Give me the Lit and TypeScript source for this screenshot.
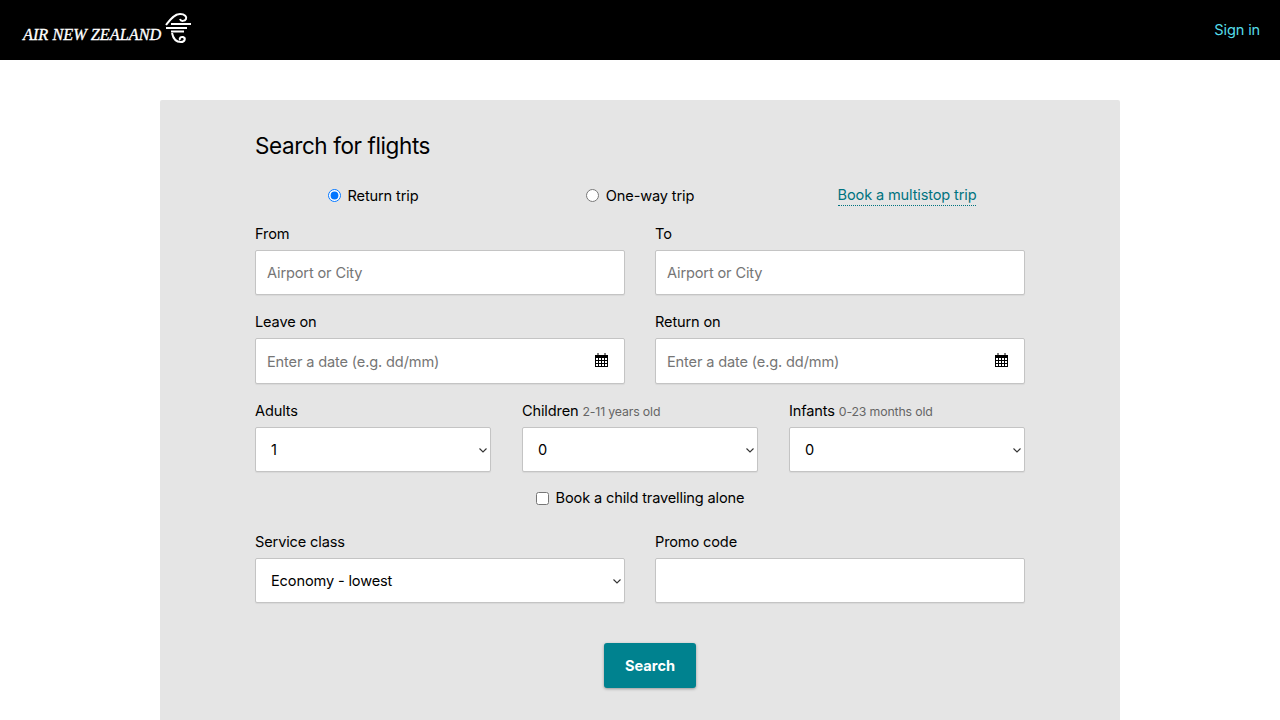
import { LitElement, html, css } from 'lit';
import { customElement } from 'lit/decorators.js';

const calendar = html`<svg class="cal" width="13" height="14" viewBox="0 0 13 14" aria-hidden="true">
    <path d="M3 0v2M10 0v2" stroke="#000" stroke-width="1" fill="none"/>
    <path fill="#000" fill-rule="evenodd" d="M0 2h13v12H0zM1 5v2h2V5zm3 0v2h2V5zm3 0v2h2V5zm3 0v2h2V5zM1 8v2h2V8zm3 0v2h2V8zm3 0v2h2V8zm3 0v2h2V8zM1 11v2h2v-2zm3 0v2h2v-2zm3 0v2h2v-2zm3 0v2h2v-2z"/>
</svg>`;

const chevron = html`<svg class="chev" width="8" height="5" viewBox="0 0 8 5" fill="none" stroke="#333" stroke-width="1.1" aria-hidden="true"><path d="M.5.5 4 4 7.500.5"/></svg>`;

@customElement('app-root')
export class AppRoot extends LitElement {
    static get styles () {
        return css`
            :host {
                display: block;
                height: 720px;
                overflow: hidden;
                background: #fff;
                color: #000;
                font-family: Inter, "Liberation Sans", sans-serif;
                font-size: 14.6px;
                letter-spacing: -.15px;
            }
            .top {
                height: 60px;
                background: #000;
                display: flex;
                align-items: center;
                justify-content: space-between;
                padding: 0 20px 0 23px;
            }
            .logo {
                display: flex;
                align-items: flex-end;
                gap: 3px;
                height: 30px;
                margin-top: -4px;
            }
            .logo span {
                font-family: "Liberation Serif", serif;
                font-style: italic;
                font-size: 16.300px;
                letter-spacing: 0;
                line-height: 18px;
                margin-bottom: -1px;
                color: #fff;
                white-space: nowrap;
                -webkit-text-stroke: .3px #fff;
            }
            .signin {
                color: #55dde8;
                text-decoration: none;
                margin-top: -1px;
            }
            main {
                width: 960px;
                margin: 40px auto 0;
                padding: 31px 95px 60px;
                box-sizing: border-box;
                background: #e5e5e5;
                border-radius: 2px;
            }
            h1 {
                margin: 0 0 19px;
                font-size: 22.500px;
                letter-spacing: -.4px;
                line-height: 30px;
                font-weight: 400;
            }
            .trip {
                display: grid;
                grid-template-columns: 236px 236px 236px;
                gap: 31px;
                height: 30px;
                align-items: center;
                justify-items: center;
                margin-bottom: 14px;
            }
            .trip .check {
                margin-top: 1px;
            }
            .check {
                display: flex;
                align-items: center;
                gap: 7px;
            }
            .check input {
                margin: 0;
                width: 13px;
                height: 13px;
                accent-color: #0075ff;
            }
            .multi {
                color: #00737f;
                text-decoration: none;
                border-bottom: 1px dotted #00737f;
                line-height: 20px;
            }
            .two {
                display: grid;
                grid-template-columns: 370px 370px;
                gap: 30px;
                margin-bottom: 17px;
            }
            .three {
                display: grid;
                grid-template-columns: 236px 236px 236px;
                gap: 31px;
                margin-bottom: 16px;
            }
            label {
                display: block;
                line-height: 20px;
                margin-bottom: 6px;
            }
            small {
                font-size: 12.300px;
                line-height: 1;
                color: #666;
            }
            input[type=text], select {
                display: block;
                box-sizing: border-box;
                width: 100%;
                height: 45px;
                border: 1px solid #c4c4c4;
                border-radius: 2px;
                box-shadow: 0 1px 1px rgba(0, 0, 0, .06);
                background: #fff;
                color: #000;
                font: inherit;
                letter-spacing: inherit;
                margin: 0;
            }
            input[type=text] {
                padding: 0 11px;
            }
            input::placeholder {
                color: #757575;
            }
            select {
                appearance: none;
                padding: 0 15px;
            }
            .date, .pick {
                position: relative;
            }
            .date input[type=text] {
                height: 46px;
                padding-top: 1px;
            }
            .cal {
                position: absolute;
                right: 17px;
                top: 15px;
            }
            .chev {
                position: absolute;
                right: 4px;
                top: 21px;
                pointer-events: none;
            }
            .alone {
                justify-content: center;
                height: 20px;
                margin-bottom: 24px;
            }
            .actions {
                display: flex;
                justify-content: center;
                margin: 40px 0 0 20px;
            }
            button {
                width: 92px;
                height: 45px;
                border: 0;
                border-radius: 3px;
                background: #00828f;
                color: #fff;
                font: 700 14.600px Inter, "Liberation Sans", sans-serif;
                box-shadow: 0 1px 3px rgba(0, 0, 0, .35);
            }
        `;
    }

    render () {
        return html`
            <header class="top">
                <div class="logo">
                    <span>AIR NEW ZEALAND</span>
                    <svg width="27" height="30" viewBox="0 0 27 30" fill="none" stroke="#fff" stroke-width="2" aria-hidden="true">
                        <path d="M2 12C6 7 10 1 16 1c5 0 7 3 6 5-1 2-5 3-6 0"/>
                        <path d="M7 11H27"/>
                        <path d="M2 15H23"/>
                        <path d="M7 18.500H20"/>
                        <path d="M8 20c1 5 4 9 9 9 4 0 5-4 2-5-2-.5-4 1-3 3"/>
                    </svg>
                </div>
                <a class="signin" href="#">Sign in</a>
            </header>
            <main>
                <h1>Search for flights</h1>
                <div class="trip">
                    <div class="check"><input type="radio" name="trip" checked>Return trip</div>
                    <div class="check"><input type="radio" name="trip">One-way trip</div>
                    <a class="multi" href="#">Book a multistop trip</a>
                </div>
                <div class="two">
                    <div><label>From</label><input type="text" placeholder="Airport or City"></div>
                    <div><label>To</label><input type="text" placeholder="Airport or City"></div>
                </div>
                <div class="two">
                    <div><label>Leave on</label><div class="date"><input type="text" placeholder="Enter a date (e.g. dd/mm)">${calendar}</div></div>
                    <div><label>Return on</label><div class="date"><input type="text" placeholder="Enter a date (e.g. dd/mm)">${calendar}</div></div>
                </div>
                <div class="three">
                    <div><label>Adults</label><div class="pick"><select><option>1</option></select>${chevron}</div></div>
                    <div><label>Children <small>2-11 years old</small></label><div class="pick"><select><option>0</option></select>${chevron}</div></div>
                    <div><label>Infants <small>0-23 months old</small></label><div class="pick"><select><option>0</option></select>${chevron}</div></div>
                </div>
                <div class="check alone"><input type="checkbox">Book a child travelling alone</div>
                <div class="two">
                    <div><label>Service class</label><div class="pick"><select><option>Economy - lowest</option></select>${chevron}</div></div>
                    <div><label>Promo code</label><input type="text"></div>
                </div>
                <div class="actions"><button>Search</button></div>
            </main>
        `;
    }
}
